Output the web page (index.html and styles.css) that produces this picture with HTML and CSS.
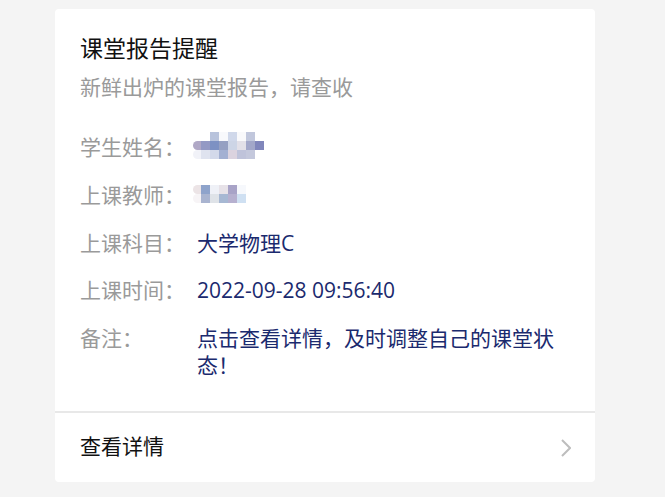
FILE: index.html
```html
<!DOCTYPE html>
<html lang="zh-CN">
<head>
  <meta charset="UTF-8" />
  <meta name="viewport" content="width=device-width, initial-scale=1.0" />
  <title>课堂报告提醒</title>
  <link rel="stylesheet" href="styles.css">
</head>
<body>
  <div class="card">
    <div class="card-body">
      <div class="title">课堂报告提醒</div>
      <div class="subtitle">新鲜出炉的课堂报告，请查收</div>

      <div class="info">
        <div class="row">
          <div class="label">学生姓名：</div>
          <div class="value">
            <div class="mosaic mosaic--name">
              <span></span><span></span><span style="background:#b8c3dc"></span><span style="background:#f8f9fc"></span><span style="background:#d0d8ea"></span><span style="background:#f9f9fb"></span><span style="background:#c1c7dc"></span><span></span>
              <span class="edge" style="background:#b0a8c6"></span><span style="background:#9499c4"></span><span style="background:#7d91c3"></span><span style="background:#95a0c2"></span><span style="background:#cdd5e6"></span><span style="background:#e2e0e8"></span><span style="background:#a2a7c9"></span><span style="background:#8086bb"></span>
              <span class="edge" style="background:#f1f2f8"></span><span style="background:#dfe3ef"></span><span style="background:#d3d9ea"></span><span style="background:#a3b0d2"></span><span style="background:#dbd3df"></span><span style="background:#bfc3da"></span><span style="background:#c4c8dc"></span><span></span>
            </div>
          </div>
        </div>
        <div class="row">
          <div class="label">上课教师：</div>
          <div class="value">
            <div class="mosaic mosaic--teacher">
              <span class="edge" style="background:#ece4e6"></span><span style="background:#8ea3cb"></span><span style="background:#eff1f7"></span><span style="background:#e7e2e8"></span><span style="background:#a8a3c7"></span><span style="background:#f6f8fc"></span>
              <span class="edge" style="background:#f7f4f6"></span><span style="background:#a9b4d0"></span><span style="background:#dfe3e8"></span><span style="background:#a7b8d3"></span><span style="background:#b6b0cf"></span><span style="background:#cfe0f2"></span>
            </div>
          </div>
        </div>
        <div class="row">
          <div class="label">上课科目：</div>
          <div class="value">大学物理C</div>
        </div>
        <div class="row">
          <div class="label">上课时间：</div>
          <div class="value">2022-09-28 09:56:40</div>
        </div>
        <div class="row">
          <div class="label">备注：</div>
          <div class="value">点击查看详情，及时调整自己的课堂状态！</div>
        </div>
      </div>
    </div>

    <div class="card-footer">
      <span class="footer-text">查看详情</span>
      <svg class="chevron" width="10" height="18" viewBox="0 0 10 18">
        <polyline points="1,1 9,9 1,17" fill="none" stroke="#bdbdbd" stroke-width="2" />
      </svg>
    </div>
  </div>
</body>
</html>
```

FILE: styles.css
```css
:root {
  --page-bg: #f4f4f4;
  --title: #111111;
  --muted: #9a9a9a;
  --value: #1b2a6e;
  --divider: #e8e8e8;
}

body {
  margin: 0;
  background: var(--page-bg);
  font-family: "Open Sans", "Noto Sans CJK SC", sans-serif;
}

.card {
  width: 540px;
  margin: 9px 0 0 55px;
  background: #fff;
  border-radius: 4px;
}

.card-body {
  padding: 25px 25px 32px;
  border-bottom: 2px solid var(--divider);
}

.title {
  font-size: 23px;
  line-height: 28px;
  color: var(--title);
}

.subtitle {
  margin-top: 12px;
  font-size: 21px;
  line-height: 27px;
  color: var(--muted);
}

.info {
  margin-top: 33px;
  display: flex;
  flex-direction: column;
  gap: 20.75px;
}

.row {
  display: flex;
  font-size: 21px;
  line-height: 27px;
}

.label {
  width: 117px;
  flex-shrink: 0;
  color: var(--muted);
}

.value {
  flex: 1;
  color: var(--value);
}

.mosaic {
  display: grid;
  grid-auto-rows: 9px;
  margin-left: -4px;
}
.mosaic--name {
  grid-template-columns: 8px repeat(7, 9px);
  margin-top: -2px;
}
.mosaic--teacher {
  grid-template-columns: 8px repeat(5, 9px);
  margin-top: 3px;
}
.mosaic .edge {
  border-radius: 5px 0 0 5px;
}

.card-footer {
  height: 69px;
  padding: 0 24px 0 25px;
  display: flex;
  align-items: center;
  justify-content: space-between;
}

.footer-text {
  margin-bottom: 6px;
  font-size: 21px;
  color: var(--title);
}

.chevron {
  display: block;
}
```
